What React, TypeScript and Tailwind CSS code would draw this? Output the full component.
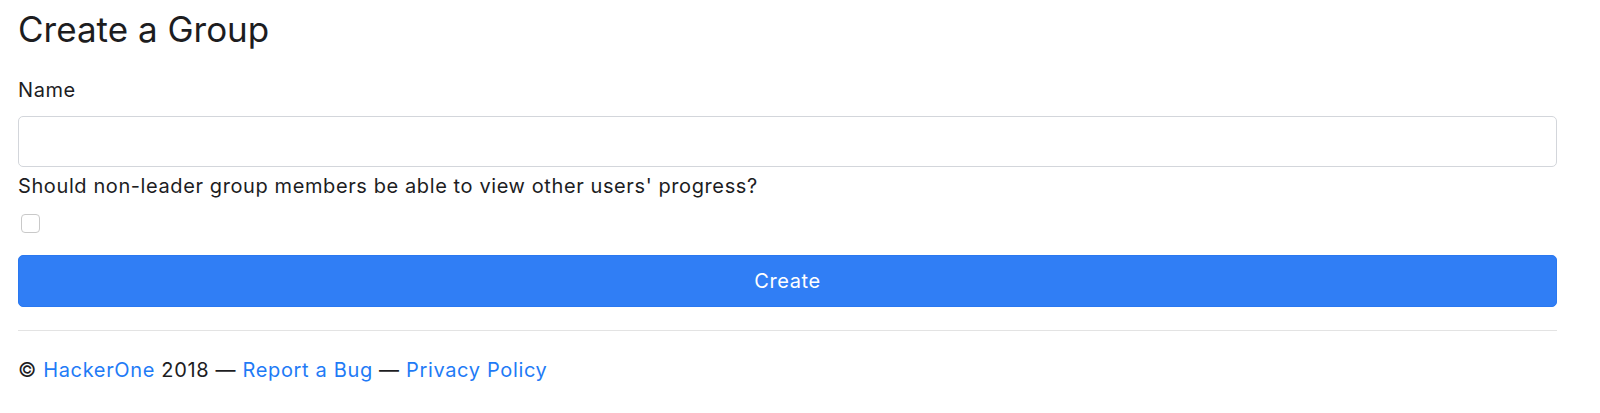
const App: React.FC = () => {
  return (
    <div
      className="min-h-screen bg-white pl-[18px] pr-[43px] pt-[8px] text-[#1d1d1f]"
      style={{ fontFamily: "Inter, 'Noto Sans', sans-serif" }}
    >
      <h3 className="text-[35px] leading-[42px] font-normal">Create a Group</h3>

      <form className="flex flex-col text-[20px] leading-[30px] tracking-[0.6px]">
        <label className="mt-[25px]">Name</label>
        <input
          type="text"
          className="mt-[11px] h-[51px] w-full rounded-[5px] border border-[#d3d6db] px-3 outline-none"
        />

        <p className="mt-[4px]">
          Should non-leader group members be able to view other users' progress?
        </p>
        <div className="mt-[13px] ml-[3px] h-[19px] w-[19px] rounded-[4px] border border-[#c9c9c9] bg-white"></div>

        <button
          type="button"
          className="mt-[22px] h-[52px] w-full rounded-[5px] border border-[#2a78f0] bg-[#307ef5] text-white"
        >
          Create
        </button>
      </form>

      <hr className="mt-[23px] border-t border-[#e3e3e3]" />

      <footer className="mt-[24px] text-[20px] leading-[30px] tracking-[0.65px]">
        © <a className="text-[#1f7bf6]">HackerOne</a> 2018 —{" "}
        <a className="text-[#1f7bf6]">Report a Bug</a> —{" "}
        <a className="text-[#1f7bf6]">Privacy Policy</a>
      </footer>
    </div>
  );
};

export default App;
